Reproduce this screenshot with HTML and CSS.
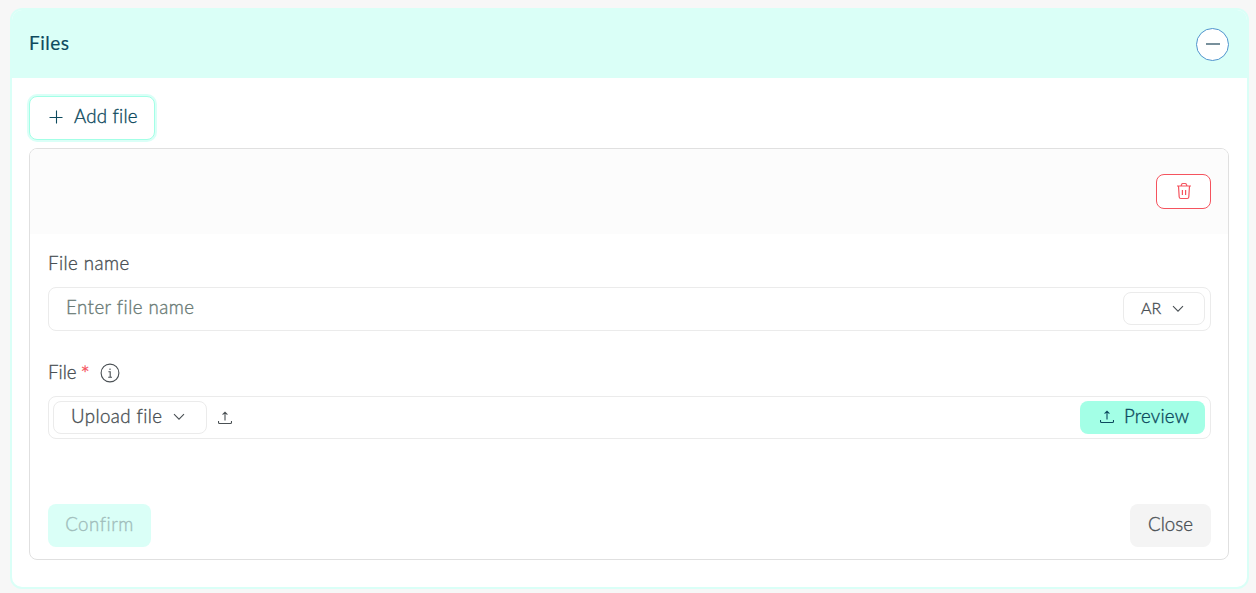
FILE: index.html
```html
<!DOCTYPE html>
<html lang="en">

<head>
  <meta charset="UTF-8" />
  <meta name="viewport" content="width=device-width, initial-scale=1.0" />
  <title>Files</title>
  <link rel="stylesheet" href="styles.css">
</head>

<body>

  <section class="card">
    <header class="card-header">
      <h2><span>Files</span></h2>
      <button class="toggle" aria-label="Collapse">
        <svg width="14" height="2" viewBox="0 0 14 2"><path d="M0 1h14" stroke="#78909c" stroke-width="2" /></svg>
      </button>
    </header>

    <div class="card-body">
      <button class="btn btn-add">
        <svg width="14" height="14" viewBox="0 0 14 14"><path d="M.5 7.5h13M7.5 .5v13" /></svg>
        <span>Add file</span>
      </button>

      <div class="panel">
        <div class="panel-header">
          <button class="btn btn-delete" aria-label="Delete">
            <svg width="16" height="18" viewBox="0 0 16 18">
              <path d="M1 4h14M5 4l.6-1.6q.3-.9 1.2-.9h2.4q.9 0 1.2.9L11 4M2.5 4l.7 11q.1 1.5 1.6 1.5h6.4q1.5 0 1.6-1.5l.7-11M6.4 8v5M9.6 8v5" />
            </svg>
          </button>
        </div>

        <div class="panel-body">
          <label class="label label-name"><span>File name</span></label>
          <div class="field field-name">
            <span class="placeholder">Enter file name</span>
            <button class="btn btn-select btn-lang">
              <span>AR</span>
              <svg width="12" height="8" viewBox="0 0 12 8"><path d="M1 1.2l5 5 5-5" /></svg>
            </button>
          </div>

          <label class="label label-file">
            <span>File</span>
            <span class="required">*</span>
            <svg width="20" height="20" viewBox="0 0 20 20">
              <circle cx="10" cy="10" r="8.9" />
              <path d="M8.4 8.7h1.8v5.5M8.2 14.2h3.8M10 5.5v1.4" />
            </svg>
          </label>
          <div class="field field-file">
            <button class="btn btn-select btn-upload">
              <span>Upload file</span>
              <svg width="12" height="8" viewBox="0 0 12 8"><path d="M1 1.2l5 5 5-5" /></svg>
            </button>
            <svg class="icon-upload" width="14" height="14" viewBox="0 0 14 14">
              <path d="M.5 10v1.5q0 1 1 1h11q1 0 1-1V10M7 9.5V1.3M4.6 3.6L7 1.2l2.4 2.4" />
            </svg>
            <button class="btn btn-preview">
              <svg width="14" height="14" viewBox="0 0 14 14">
                <path d="M.5 10v1.5q0 1 1 1h11q1 0 1-1V10M7 9.5V1.3M4.6 3.6L7 1.2l2.4 2.4" />
              </svg>
              <span>Preview</span>
            </button>
          </div>

          <div class="actions">
            <button class="btn btn-confirm" disabled><span>Confirm</span></button>
            <button class="btn btn-close"><span>Close</span></button>
          </div>
        </div>
      </div>
    </div>
  </section>

</body>

</html>
```
FILE: styles.css
```css
* {
  box-sizing: border-box;
}

body {
  margin: 0;
  padding: 8px 7px 4px 10px;
  height: 593px;
  overflow: hidden;
  background: #f7f7f7;
  color: #4a5054;
  font-family: Lato, sans-serif;
  font-size: 18.7px;
  font-weight: 300;
  line-height: 24px;
}

svg {
  display: block;
  flex: none;
  fill: none;
  stroke: currentColor;
  stroke-width: 1.1;
}

span {
  white-space: nowrap;
  -webkit-text-stroke: 0.35px currentColor;
}

.card {
  height: 581px;
  border: 2px solid #dafff7;
  border-radius: 12px;
  background: #ffffff;
  overflow: hidden;
}

.card-header {
  display: flex;
  align-items: center;
  justify-content: space-between;
  height: 68px;
  padding: 0 18px 0 17px;
  background: #dafff7;
}

.card-header h2 {
  margin: 0 0 2px;
  color: #0d4a5e;
  font-size: 19px;
  font-weight: 400;
  letter-spacing: 0.5px;
}

.card-header span {
  -webkit-text-stroke-width: 0.15px;
}

.toggle {
  display: flex;
  align-items: center;
  justify-content: center;
  width: 33px;
  height: 33px;
  padding: 0;
  border: 1px solid #4f94cd;
  border-radius: 50%;
  background: #ffffff;
}

.card-body {
  padding: 18px 18px 0 17px;
}

.btn {
  display: flex;
  align-items: center;
  justify-content: center;
  padding: 0 0 2px;
  border: 1px solid transparent;
  border-radius: 8px;
  background: #ffffff;
  color: inherit;
  font: inherit;
}

.btn-add {
  justify-content: flex-start;
  gap: 11px;
  width: 126px;
  height: 44px;
  padding-left: 19px;
  border-color: #a3ffe6;
  box-shadow: 0 0 0 2px #dafff7;
  color: #0d4a5e;
  letter-spacing: 0.2px;
}

.panel {
  height: 412px;
  margin-top: 8px;
  border: 1px solid #e0e0e0;
  border-radius: 8px;
  overflow: hidden;
}

.panel-header {
  display: flex;
  align-items: center;
  justify-content: flex-end;
  height: 85px;
  padding-right: 17px;
  background: #fcfcfc;
}

.btn-delete {
  width: 55px;
  height: 35px;
  border-color: #f5535e;
  color: #f5535e;
}

.btn-delete svg {
  stroke-width: 1.2;
}

.panel-body {
  padding: 18px 17px 0 18px;
}

.label {
  display: flex;
  align-items: center;
  height: 24px;
}

.label span {
  margin-top: -2px;
}

.label-name {
  letter-spacing: 0.45px;
}

.label-file {
  margin-top: 30px;
}

.label .required {
  width: 8px;
  margin: 1px 11px 0 4px;
  color: #f5535e;
  font-size: 22px;
}

.field {
  display: flex;
  align-items: center;
  padding: 0 5px 0 4px;
  border: 1px solid #ebebeb;
  border-radius: 8px;
}

.field-name {
  height: 44px;
  margin-top: 11px;
}

.field-file {
  height: 43px;
  margin-top: 11px;
}

.placeholder {
  padding: 0 0 4px 13px;
  color: #6a7b76;
  letter-spacing: 0.45px;
}

.btn-select {
  justify-content: flex-start;
  height: 33px;
  padding-left: 17px;
  border-color: #ebebeb;
}

.btn-lang {
  gap: 11px;
  width: 82px;
  margin: 0 0 1px auto;
  padding-bottom: 0;
  font-size: 16px;
}

.btn-upload {
  gap: 11px;
  width: 154px;
  letter-spacing: 0.4px;
}

.icon-upload {
  margin-left: 11px;
}

.btn-preview {
  justify-content: flex-start;
  gap: 10px;
  width: 125px;
  height: 33px;
  margin-left: auto;
  padding-left: 19px;
  background: #a3ffe6;
  color: #0d4a5e;
  letter-spacing: 0.2px;
}

.btn span {
  margin-top: -1px;
}

.btn-add span {
  margin-top: -2px;
}

.actions {
  display: flex;
  justify-content: space-between;
  margin-top: 65px;
}

.btn-confirm {
  width: 103px;
  height: 43px;
  background: #dafff7;
  color: #a0bdbb;
  letter-spacing: 0.5px;
}

.btn-close {
  width: 81px;
  height: 43px;
  background: #f4f4f4;
}
```
